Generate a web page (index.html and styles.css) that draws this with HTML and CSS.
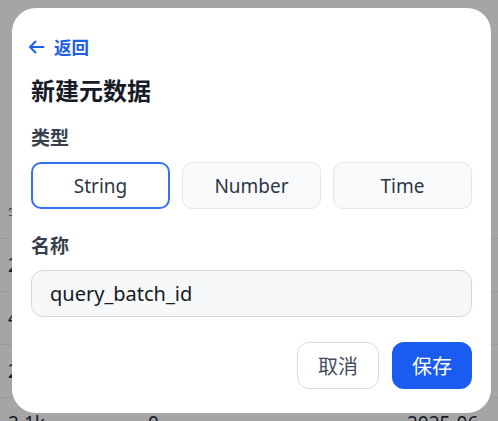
FILE: index.html
```html
<!DOCTYPE html>
<html lang="zh-CN">
<head>
<meta charset="utf-8">
<title>新建元数据</title>
<link rel="stylesheet" href="styles.css">
</head>
<body>
<div class="page">
  <div class="table">
    <div class="row head"><span class="c1">字段</span><span class="c2"></span><span class="c3">⌄</span></div>
    <div class="row"><span class="c1">2</span><span class="c2"></span><span class="c3">-</span></div>
    <div class="row"><span class="c1">4</span><span class="c2"></span><span class="c3">-</span></div>
    <div class="row"><span class="c1">2</span><span class="c2"></span><span class="c3">-</span></div>
    <div class="row"><span class="c1">2.1k</span><span class="c2">0</span><span class="c3">2025-06</span></div>
  </div>
</div>
<div class="overlay"></div>
<div class="modal">
  <a class="back" href="#">
    <svg width="17" height="16" viewBox="0 0 17 16" fill="none" stroke="currentColor" stroke-width="2" stroke-linecap="round" stroke-linejoin="round"><path d="M15.5 8H2M7.5 2.5L2 8l5.5 5.5"/></svg>
    <span>返回</span>
  </a>
  <h1 class="title">新建元数据</h1>
  <div class="label">类型</div>
  <div class="types">
    <button class="type active">String</button>
    <button class="type">Number</button>
    <button class="type">Time</button>
  </div>
  <div class="label label-name">名称</div>
  <div class="input">query_batch_id</div>
  <div class="footer">
    <button class="btn cancel">取消</button>
    <button class="btn save">保存</button>
  </div>
</div>
</body>
</html>
```
FILE: styles.css
```css
* { box-sizing: border-box; }
html, body {
  margin: 0;
  padding: 0;
  width: 498px;
  height: 421px;
  overflow: hidden;
}
body {
  font-family: "Noto Sans", "Noto Sans CJK SC", sans-serif;
  background: #f4f4f4;
  position: relative;
}
.page {
  padding-top: 186px;
}
.table .row {
  display: flex;
  align-items: center;
  height: 53px;
  border-bottom: 1px solid #e2e2e2;
  padding: 0 8px;
  font-size: 19px;
  color: #1f2937;
}
.table .row.head {
  font-size: 15px;
  color: #6b7280;
}
.table .row:last-child {
  align-items: flex-start;
  padding-top: 12px;
}
.c1 { width: 140px; }
.c2 { flex: 1; }
.c3 { width: 83px; }
.overlay {
  position: absolute;
  inset: 0;
  background: rgba(0, 0, 0, 0.32);
}
.modal {
  position: absolute;
  left: 12px;
  top: 8px;
  width: 479px;
  height: 405px;
  background: #fff;
  border-radius: 24px;
  padding: 28px 19px 24px;
}
.back {
  display: flex;
  align-items: center;
  gap: 9px;
  height: 22px;
  line-height: 22px;
  color: #1d5fe9;
  font-weight: 700;
  font-size: 17.5px;
  text-decoration: none;
  margin-left: -3px;
}
.back svg { display: block; }
.title {
  margin: 18px 0 0;
  height: 30px;
  line-height: 30px;
  font-size: 24px;
  font-weight: 700;
  color: #161b26;
}
.label {
  margin-top: 20px;
  height: 24px;
  line-height: 24px;
  font-size: 19px;
  font-weight: 700;
  color: #373e4c;
}
.label-name { margin-top: 25px; }
.types {
  margin-top: 12px;
  display: grid;
  grid-template-columns: repeat(3, 1fr);
  gap: 12px;
}
button {
  font-family: inherit;
}
.type {
  height: 47px;
  border: 1px solid #e4e6eb;
  background: #f9fafb;
  border-radius: 10px;
  font-size: 19px;
  color: #2e3646;
  padding: 0;
}
.type.active {
  border: 2px solid #3570f0;
  background: #fff;
}
.input {
  margin-top: 12px;
  height: 47px;
  border: 1px solid #d2d7df;
  background: #f7f8fa;
  border-radius: 12px;
  padding: 0 18px;
  display: flex;
  align-items: center;
  font-size: 20px;
  color: #151a24;
}
.footer {
  margin-top: 25px;
  display: flex;
  justify-content: flex-end;
  gap: 13px;
}
.btn {
  height: 47px;
  border-radius: 12px;
  font-size: 20px;
  padding: 0 20px;
}
.cancel {
  background: #fff;
  border: 1px solid #d9dce1;
  color: #454c5a;
}
.save {
  background: #1a5cf0;
  border: none;
  color: #fff;
}
```
